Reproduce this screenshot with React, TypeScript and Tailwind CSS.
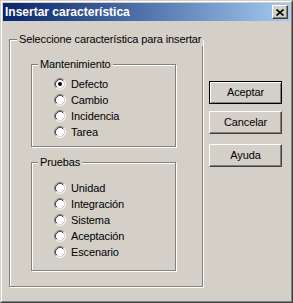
import type { ReactNode } from 'react';

function Radio({ checked }: { checked?: boolean }) {
  return (
    <svg width="12" height="12" viewBox="0 0 12 12" className="shrink-0">
      <circle cx="6" cy="6" r="4.5" fill="#fff" />
      <path d="M2.11 9.89 A5.5 5.5 0 0 1 9.89 2.11" fill="none" stroke="#808080" strokeWidth="1" />
      <path d="M9.89 2.11 A5.5 5.5 0 0 1 2.11 9.89" fill="none" stroke="#fff" strokeWidth="1" />
      <path d="M2.82 9.18 A4.5 4.5 0 0 1 9.18 2.82" fill="none" stroke="#404040" strokeWidth="1" />
      <path d="M9.18 2.82 A4.5 4.5 0 0 1 2.82 9.18" fill="none" stroke="#d4d0c8" strokeWidth="1" />
      {checked && <circle cx="6" cy="6" r="2" fill="#000" />}
    </svg>
  );
}

function Option({ label, checked }: { label: string; checked?: boolean }) {
  return (
    <div className="flex h-[16px] items-center gap-[5px]">
      <Radio checked={checked} />
      <span className="leading-[13px]">{label}</span>
    </div>
  );
}

function Group({ label, labelLeft, className, children }: { label: string; labelLeft: string; className: string; children: ReactNode }) {
  return (
    <div className={`relative border border-[#808080] shadow-[inset_1px_1px_0_#fff,1px_1px_0_#fff] ${className}`}>
      <span className={`absolute top-[-7px] bg-[#d4d0c8] px-[2px] leading-[13px] whitespace-nowrap ${labelLeft}`}>{label}</span>
      {children}
    </div>
  );
}

function Button({ label, isDefault }: { label: string; isDefault?: boolean }) {
  const bevel = isDefault
    ? 'border border-black shadow-[inset_1px_1px_0_#fff,inset_-1px_-1px_0_#808080]'
    : 'border border-t-white border-l-white border-r-[#404040] border-b-[#404040] shadow-[inset_-1px_-1px_0_#808080]';
  return (
    <button className={`flex h-[23px] w-[73px] items-center justify-center bg-[#d4d0c8] leading-[13px] text-black ${bevel}`}>
      {label}
    </button>
  );
}

export default function App() {
  return (
    <div className="h-[303px] w-[293px] border border-t-[#d4d0c8] border-l-[#d4d0c8] border-r-[#404040] border-b-[#404040] font-['Liberation_Sans',Arial,sans-serif] text-[11px] tracking-[-0.12px] text-black">
      <div className="flex h-full flex-col border border-t-white border-l-white border-r-[#808080] border-b-[#808080] bg-[#d4d0c8] p-px">
        <div className="flex h-[18px] items-center bg-linear-to-r from-[#0a246a] to-[#a6caf0] px-[2px]">
          <span className="text-[12px] font-bold leading-[14px] tracking-normal text-white">Insertar característica</span>
          <div className="ml-auto flex h-[14px] w-[16px] items-center justify-center border border-t-white border-l-white border-r-[#404040] border-b-[#404040] bg-[#d4d0c8] shadow-[inset_-1px_-1px_0_#808080]">
            <svg width="8" height="7" viewBox="0 0 8 7">
              <path d="M0.5 0.5 L7.5 6.5 M7.5 0.5 L0.5 6.5" stroke="#000" strokeWidth="1.7" />
            </svg>
          </div>
        </div>

        <div className="flex items-start">
          <Group
            label="Seleccione característica para insertar"
            labelLeft="left-[7px]"
            className="ml-[6px] mt-[18px] h-[248px] w-[194px] pl-[21px] pt-[24px]"
          >
            <Group label="Mantenimiento" labelLeft="left-[6px]" className="h-[83px] w-[145px] pl-[22px] pt-[11px]">
              <Option label="Defecto" checked />
              <Option label="Cambio" />
              <Option label="Incidencia" />
              <Option label="Tarea" />
            </Group>
            <Group label="Pruebas" labelLeft="left-[6px]" className="mt-[15px] h-[109px] w-[145px] pl-[22px] pt-[17px]">
              <Option label="Unidad" />
              <Option label="Integración" />
              <Option label="Sistema" />
              <Option label="Aceptación" />
              <Option label="Escenario" />
            </Group>
          </Group>

          <div className="ml-[6px] mt-[60px] flex flex-col">
            <Button label="Aceptar" isDefault />
            <div className="mt-[7px]">
              <Button label="Cancelar" />
            </div>
            <div className="mt-[10px]">
              <Button label="Ayuda" />
            </div>
          </div>
        </div>
      </div>
    </div>
  );
}
